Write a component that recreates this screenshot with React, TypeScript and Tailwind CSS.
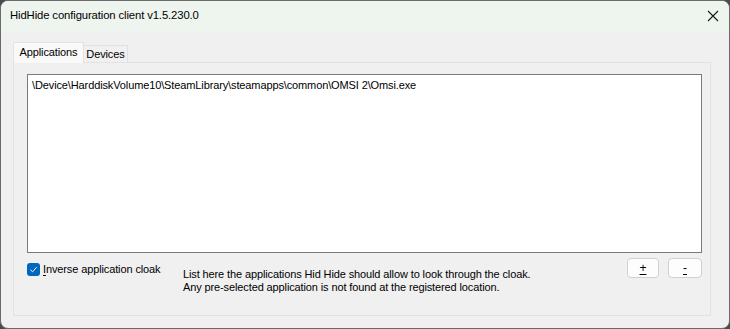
import React from "react";

export default function App() {
  return (
    <div className="w-[730px] h-[329px] bg-[#4a4a4a] font-['Liberation_Sans',Arial,sans-serif] text-[11px] tracking-[-0.12px] text-black">
      <div className="w-full h-full rounded-[8px] border border-[#6b6b6b] overflow-hidden flex flex-col bg-[#f0f0f0]">
        <div className="h-[30px] shrink-0 bg-[#eef4ee] flex items-center justify-between pl-[9px] pr-[9px]">
          <span className="text-[11.3px] leading-none">HidHide configuration client v1.5.230.0</span>
          <svg width="12" height="12" viewBox="0 0 12 12" className="mr-[1px]">
            <path d="M1 1 L11 11 M11 1 L1 11" stroke="#1a1a1a" strokeWidth="1.1" fill="none" />
          </svg>
        </div>
        <div className="flex-1 flex flex-col pl-[12px] pr-[18px] pt-[11px] pb-[12px]">
          <div className="flex items-end h-[20px] relative z-10">
            <div className="h-[21px] w-[71px] bg-[#f9f9f9] border border-b-0 border-[#e2e2e2] rounded-t-[2px] flex items-center justify-center mb-[-1px] pb-[1px]">
              Applications
            </div>
            <div className="h-[17px] w-[44px] bg-[#f0f0f0] border border-b-0 border-l-0 border-[#e2e2e2] flex items-center justify-center pt-[1px]">
              Devices
            </div>
          </div>
          <div className="flex-1 border border-[#e2e2e2] bg-[#f0f0f0] flex flex-col pl-[13px] pr-[8px] pt-[11px]">
            <div className="h-[179px] bg-white border border-[#7a7a7a] px-[4px] pt-[3px]">
              <div className="leading-[14px]">\Device\HarddiskVolume10\SteamLibrary\steamapps\common\OMSI 2\Omsi.exe</div>
            </div>
            <div className="flex mt-[5px]">
              <div className="flex items-start mt-[5px] w-[156px] shrink-0">
                <div className="w-[13px] h-[13px] rounded-[3px] bg-[#0067c0] flex items-center justify-center shrink-0">
                  <svg width="9" height="9" viewBox="0 0 9 9">
                    <path d="M1.5 4.8 L3.6 6.8 L7.6 2.2" stroke="white" strokeWidth="1" fill="none" />
                  </svg>
                </div>
                <span className="ml-[3px] leading-[13px]">
                  <span className="underline underline-offset-2">I</span>nverse application cloak
                </span>
              </div>
              <div className="flex-1 pt-[10px] leading-[13px]">
                <div>List here the applications Hid Hide should allow to look through the cloak.</div>
                <div>Any pre-selected application is not found at the registered location.</div>
              </div>
              <div className="flex gap-[9px] shrink-0">
                <button className="w-[32px] h-[20px] rounded-[4px] border border-[#d0d0d0] bg-[#fdfdfd] flex items-center justify-center leading-none text-[12px]">
                  <span className="underline underline-offset-2">+</span>
                </button>
                <button className="w-[34px] h-[20px] rounded-[4px] border border-[#d0d0d0] bg-[#fdfdfd] flex items-center justify-center leading-none text-[12px]">
                  <span className="underline underline-offset-2">-</span>
                </button>
              </div>
            </div>
          </div>
        </div>
      </div>
    </div>
  );
}
